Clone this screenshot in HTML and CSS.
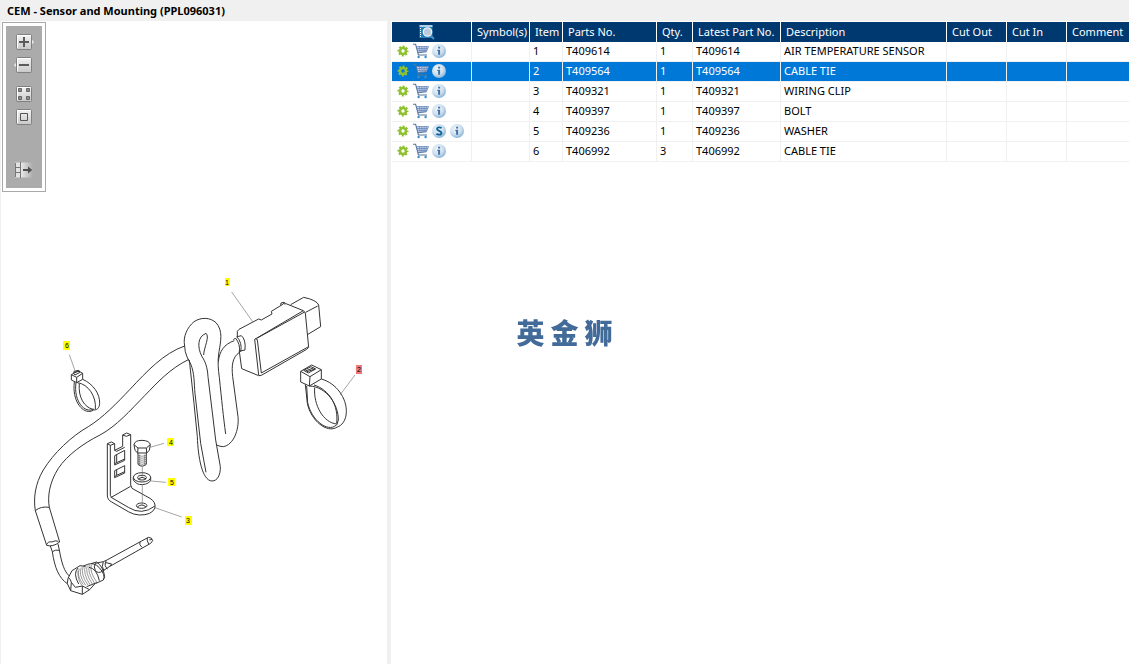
FILE: index.html
```html
<!DOCTYPE html>
<html lang="en">
  <head>
    <meta charset="UTF-8" />
    <meta name="viewport" content="width=device-width, initial-scale=1.0" />
    <title>CEM - Sensor and Mounting (PPL096031)</title>
    <link rel="stylesheet" href="styles.css">
  </head>
  <body>
    <!-- shared icons -->
    <svg class="sprite" aria-hidden="true">
      <defs>
        <linearGradient id="btnFill" x1="0" y1="0" x2="0" y2="1">
          <stop offset="0" stop-color="#f4f4f4" />
          <stop offset="1" stop-color="#c9c9c9" />
        </linearGradient>
        <linearGradient id="fadeFill" x1="0" y1="0" x2="1" y2="0">
          <stop offset="0" stop-color="#e8e8e8" />
          <stop offset="1" stop-color="#ababab" />
        </linearGradient>
        <radialGradient id="discFill" cx="0.4" cy="0.35" r="0.65">
          <stop offset="0" stop-color="#eef5fa" />
          <stop offset="0.6" stop-color="#cfe1ef" />
          <stop offset="1" stop-color="#8fb6d8" />
        </radialGradient>
      </defs>
      <symbol id="gear" viewBox="0 0 16 16">
        <circle cx="8" cy="8" r="3" fill="none" stroke="#8fc131" stroke-width="2.6" />
        <circle cx="8" cy="8" r="4.6" fill="none" stroke="#8fc131" stroke-width="1.8" stroke-dasharray="2 1.61" stroke-dashoffset="1" />
      </symbol>
      <symbol id="cart" viewBox="0 0 16 16">
        <path d="M3.5 3.5h12l-2 5.2-8.5 1z" fill="#c3d2ea" />
        <path d="M0 1.2h2.6L5.4 12h8.6M5 9.7l8.4-1" fill="none" stroke="#55759f" stroke-width="1.1" />
        <path d="M3.4 3.5h12.2l-2.2 5.2M4 5.5h10.8M4.6 7.4h9.4M6.3 3.4l.9 6M8.8 3.4l.3 5.7M11.2 3.4l-.2 5.5M13.5 3.4l-.9 5.4" fill="none" stroke="#6484b8" stroke-width="0.7" />
        <circle cx="5.6" cy="14" r="1.2" fill="#3f8fc5" />
        <circle cx="12.6" cy="14" r="1.2" fill="#3f8fc5" />
      </symbol>
      <symbol id="info" viewBox="0 0 16 16">
        <circle cx="8" cy="8" r="7" fill="url(#discFill)" />
        <path d="M7.1 3.8h2v1.7h-2zM6.3 6.7h2.8v5H7.1V7.9h-.8z" fill="#4670a8" />
      </symbol>
      <symbol id="disc" viewBox="0 0 16 16">
        <circle cx="8" cy="8" r="7" fill="url(#discFill)" />
        <path d="M10.6 5.1C9 3.9 6 4.1 6 6s4.5 1.7 4.5 3.9c0 2.1-3.4 2.2-5.1.9" fill="none" stroke="#12659b" stroke-width="1.9" />
      </symbol>
    </svg>

    <h1 class="title">CEM - Sensor and Mounting (PPL096031)</h1>

    <main class="panes">
      <section class="drawing-pane" aria-label="Drawing">
        <div class="toolbar">
          <div class="toolbar-inner">
            <button class="tool" aria-label="Zoom in">
              <svg viewBox="0 0 20 16"><path d="M17 5.5L19.5 8 17 10.5z" fill="#e4e4e4" stroke="#f4f4f4" /><rect x="2.5" y="0.5" width="15" height="15" rx="1" fill="url(#btnFill)" stroke="#808080" /><path d="M3.5 14V1.5H16.5" fill="none" stroke="#fff" /><path d="M5 8h10M10 3v10" stroke="#5c5c5c" stroke-width="2" /></svg>
            </button>
            <button class="tool" aria-label="Zoom out">
              <svg viewBox="0 0 20 16"><path d="M3 5.5L.5 8 3 10.5z" fill="#e4e4e4" stroke="#f4f4f4" /><rect x="2.5" y="0.5" width="15" height="15" rx="1" fill="url(#btnFill)" stroke="#808080" /><path d="M3.5 14V1.5H16.5" fill="none" stroke="#fff" /><path d="M5 8h10" stroke="#5c5c5c" stroke-width="2" /></svg>
            </button>
            <button class="tool tool-group" aria-label="Fit page">
              <svg viewBox="0 0 20 16"><rect x="2.5" y="0.5" width="15" height="15" rx="1" fill="url(#btnFill)" stroke="#808080" /><path d="M3.5 14V1.5H16.5" fill="none" stroke="#fff" /><path d="M4.5 2.5h3v3h-3zM12.5 2.5h3v3h-3zM4.5 10.5h3v3h-3zM12.5 10.5h3v3h-3z" fill="#8c8c8c" stroke="#666" /></svg>
            </button>
            <button class="tool" aria-label="Actual size">
              <svg viewBox="0 0 20 16"><rect x="2.5" y="0.5" width="15" height="15" rx="1" fill="url(#btnFill)" stroke="#808080" /><path d="M3.5 14V1.5H16.5" fill="none" stroke="#fff" /><path d="M6.5 4.5h7v7h-7z" fill="none" stroke="#555" /></svg>
            </button>
            <button class="tool tool-last" aria-label="Hide list">
              <svg viewBox="0 0 20 16"><path d="M1 0.5h5v15H1z" fill="#e2e2e2" /><path d="M1 5.5h5M1 10.5h5M1.5 1v14M6.5 0v16" fill="none" stroke="#777" /><rect x="7" y="0.5" width="12" height="15" fill="url(#fadeFill)" /><path d="M9 8h6" stroke="#505050" stroke-width="2" /><path d="M14 4.5l4.2 3.5-4.2 3.5z" fill="#505050" /></svg>
            </button>
          </div>
        </div>

        <svg class="drawing" viewBox="1 21 386 643" role="img" aria-label="Sensor and mounting parts">
          <!-- sensor box, cable loops and large cable tie -->
          <g class="line" transform="translate(180 270) scale(0.33333)">
            <path d="M14 228C8 200 22 172 42 155C65 140 92 143 108 158C130 182 122 215 117 245C112 275 115 300 118 322C125 390 130 440 137 492" />
            <path d="M14 228C14 250 24 268 32 282C44 310 42 340 45 370L62 520L78 607" />
            <path d="M28 270L42 400L52 500C54 560 66 632 96 633C112 633 122 615 121 590L107 510L84 320C82 290 76 275 65 258C52 232 52 200 78 190C90 200 72 232 71 255" />
            <path d="M110 525Q120 530 130 530C160 525 178 480 174 440L158 320C154 285 158 262 177 248M115 275C118 245 132 222 163 212" />
            <path d="M160 210L166 204Q182 222 178 247M170 200Q188 218 182 246M172 200L184 197Q198 208 195 240L180 243" />
            <path d="M172 202V184L177 178L236 147L244 150L276 132L274 124L302 107L303 99L312 97L318 101L370 122L376 129L386 232L380 238L244 316L236 317L185 296L178 244M302 107L312 100L316 104M236 315L224 208L370 122M226 206L232 209L244 309L384 231M232 204L374 126" />
            <path d="M332 104L371 82Q410 90 416 105L422 170L382 194M377 127L413 108" />
            <path d="M362 304L395 285L424 299V327L388 348L362 336ZM362 304L390 320L424 299M390 320L388 348M371 301L393 290L407 297L385 309ZM376 303L400 294M381 305L405 297" />
            <path d="M424 327C470 340 500 385 499 425C499 452 484 468 472 471C440 492 392 450 382 400L376 343M380 348L383 398C394 450 442 488 468 466M388 348C440 350 476 405 475 450L470 466M402 345C450 360 476 408 470 460M404 353C400 405 430 458 470 462" />
            <path class="leader" d="M155 66L218 155M525 315L480 375" />
          </g>

          <!-- main cable and small cable tie -->
          <g class="line" transform="translate(20 330) scale(0.33333)">
            <path d="M494 48C430 70 380 125 330 178C290 220 250 262 205 290C155 318 100 370 70 420C45 462 40 505 46 542" />
            <path d="M507 88C450 115 410 160 375 196C330 242 290 288 240 315C190 340 142 375 115 415C88 458 82 500 88 532" />
            <path d="M154 134L175 122L188 130V148L170 158L154 150ZM154 134L170 142L188 130M170 142V158M161 131L162 124L176 121L180 127L165 135ZM163 127L178 124" />
            <path d="M188 148C220 162 240 192 239 220C238 236 230 240 221 240C195 258 155 220 163 156M168 158C160 215 195 252 222 237M172 158C205 162 230 200 226 238M178 161C174 202 193 232 219 238" />
            <path class="leader" d="M148 74L165 122" />
          </g>

          <!-- probe, bracket, bolt and washer -->
          <g class="line" transform="translate(20 420) scale(0.33333)">
            <path d="M46 272Q62 258 88 262M46 272L80 376M88 262L119 366M80 376Q98 382 119 366M80 374Q84 363 96 366Q105 360 115 364" />
            <path d="M91 378L97 395C104 445 118 475 142 491M114 372L118 390C125 430 133 455 148 468M97 395Q106 388 118 391" />
            <path d="M142 491L144 475L156 452L180 437L196 439M142 491L152 512L187 523L209 509L226 490M144 472Q152 476 154 487L166 502L187 498L209 509M154 487L152 512M187 498V523M174 444Q158 460 176 492" />
            <path class="thread" d="M178 446Q168 466 190 494M184 442Q174 464 197 496M190 439Q180 462 204 495M196 437Q188 460 210 494M202 436Q194 458 217 492M208 434Q201 458 224 490M214 434Q208 456 230 486M174 452Q172 478 186 497" />
            <path d="M190 438L203 433M200 500L230 488" />
            <path d="M203 433Q222 426 238 443Q258 466 250 480L228 490M213 431L230 426Q250 440 254 470L250 480M207 442Q230 445 238 482" />
            <path d="M226 430L250 425L259 421L385 352Q397 352 398 362L392 370L268 440L248 453Q235 462 226 452Q220 440 226 430M250 425Q243 440 252 453M259 421Q250 438 263 447M258 428L275 432L268 440M360 366Q356 374 366 382M382 354Q380 362 386 372M388 360L396 358" />
            <path d="M262 71L274 66L284 71V91L308 79V45L320 39L332 44V195L336 205L390 235Q408 246 405 264Q395 286 358 285Q340 284 325 275L275 246Q262 240 262 225ZM262 71L271 76L284 71M271 76V226L275 233L325 262Q365 288 405 258M272 233L332 199M308 45L319 49L332 44M284 91L290 94L314 82" />
            <path d="M284 107L314 91V121L284 135ZM290 104V128L314 117M284 152L314 137V159L284 173ZM290 149V166L314 155M284 131L290 128M284 170L290 166" />
            <ellipse cx="365" cy="257" rx="16" ry="8" />
            <path d="M352 261Q366 249 378 261" />
            <ellipse cx="366" cy="172" rx="26" ry="14" />
            <ellipse cx="366" cy="173" rx="13" ry="7" />
            <path d="M340 172V180Q350 195 367 194Q388 192 392 180V172M355 176Q366 168 378 176" />
            <path d="M342 74Q344 61 366 61Q389 62 391 74L388 91L380 99L353 99L345 91ZM342 74L354 84L379 84L391 74M354 84L353 99M379 84L380 99" />
            <path d="M354 99V133Q366 144 379 133V99" />
            <path class="thread" d="M354 106Q366 112 379 106M354 112Q366 118 379 112M354 118Q366 124 379 118M354 124Q366 130 379 124M354 130Q366 136 379 130M359 104V136M374 104V136" />
            <path class="leader" d="M367 140V170M367 196V254M390 82L432 70M392 183L438 187M405 263L485 291" />
          </g>

          <g class="callout">
            <rect x="225" y="278" width="5" height="8" /><text x="227" y="285">1</text>
            <rect class="picked" x="356" y="365" width="6" height="9" /><text x="359" y="372">2</text>
            <rect x="185" y="516" width="7" height="9" /><text x="188" y="523">3</text>
            <rect x="167" y="438" width="7" height="8" /><text x="171" y="445">4</text>
            <rect x="168" y="478" width="7" height="8" /><text x="172" y="485">5</text>
            <rect x="63" y="341" width="7" height="9" /><text x="67" y="348">6</text>
          </g>
        </svg>
      </section>

      <section class="list-pane" aria-label="Parts list">
        <table class="parts">
          <colgroup>
            <col class="col-icons"><col class="col-symbols"><col class="col-item"><col class="col-part"><col class="col-qty"><col class="col-latest"><col class="col-desc"><col class="col-cut"><col class="col-cut"><col>
          </colgroup>
          <thead>
            <tr>
              <th>
                <button class="search" aria-label="Search list">
                  <svg viewBox="0 0 16 16"><rect x="0.5" y="1" width="13" height="13" fill="#2580b8" /><path d="M0.5 2h13" stroke="#dceaf5" stroke-width="1.5" /><path d="M1.5 4v9.5" stroke="#fff" stroke-dasharray="1 1" /><path d="M11.5 11.5l3.5 3.5" stroke="#4d91c8" stroke-width="2" /><circle cx="8.5" cy="8" r="4.2" fill="#b9cbdc" stroke="#edf4f9" stroke-width="1.3" /></svg>
                </button>
              </th>
              <th>Symbol(s)</th>
              <th>Item</th>
              <th>Parts No.</th>
              <th>Qty.</th>
              <th>Latest Part No.</th>
              <th>Description</th>
              <th>Cut Out</th>
              <th>Cut In</th>
              <th>Comment</th>
            </tr>
          </thead>
          <tbody id="partRows"></tbody>
        </table>
      </section>
    </main>

    <div class="watermark" lang="zh-CN"><span>英</span><span>金</span><span>狮</span></div>

    <script>
      const parts = [
        { item: 1, no: "T409614", qty: 1, desc: "AIR TEMPERATURE SENSOR" },
        { item: 2, no: "T409564", qty: 1, desc: "CABLE TIE", selected: true },
        { item: 3, no: "T409321", qty: 1, desc: "WIRING CLIP" },
        { item: 4, no: "T409397", qty: 1, desc: "BOLT" },
        { item: 5, no: "T409236", qty: 1, desc: "WASHER", supersession: true },
        { item: 6, no: "T406992", qty: 3, desc: "CABLE TIE" },
      ];

      const icon = (id, label) =>
        `<button class="icon" aria-label="${label}"><svg><use href="#${id}" /></svg></button>`;

      const PartRow = (part) => `
        <tr class="${part.selected ? "selected" : ""}">
          <td>
            <div class="icons">
              ${icon("gear", "Options")}${icon("cart", "Add to cart")}${part.supersession ? icon("disc", "Supersession") : ""}${icon("info", "Information")}
            </div>
          </td>
          <td></td>
          <td>${part.item}</td>
          <td>${part.no}</td>
          <td>${part.qty}</td>
          <td>${part.no}</td>
          <td>${part.desc}</td>
          <td></td>
          <td></td>
          <td></td>
        </tr>
      `;

      document.getElementById("partRows").innerHTML = parts.map(PartRow).join("");
    </script>
  </body>
</html>
```
FILE: styles.css
```css
* {
  box-sizing: border-box;
  margin: 0;
  padding: 0;
}

body {
  display: flex;
  flex-direction: column;
  height: 100vh;
  overflow: hidden;
  background: #f0f0f0;
  color: #000;
  font-family: "Noto Sans", "Open Sans", sans-serif;
  font-size: 11px;
}

button {
  display: block;
  border: 0;
  background: none;
  cursor: pointer;
}

button svg {
  display: block;
  width: 100%;
  height: 100%;
}

.sprite {
  position: absolute;
  width: 0;
  height: 0;
}

.title {
  padding: 0 7px;
  font-size: 11px;
  font-weight: 700;
  line-height: 21px;
}

.panes {
  display: flex;
  flex: 1;
  min-height: 0;
}

/* drawing */
.drawing-pane {
  position: relative;
  flex: 0 0 391px;
  border-left: 1px solid #f0f0f0;
  border-right: 4px solid #f0f0f0;
  background: #fff;
}

.drawing {
  display: block;
  width: 100%;
}

.toolbar {
  position: absolute;
  top: 1px;
  left: 1px;
  padding: 3px;
  border: 1px solid #a9a9a9;
  background: #fff;
}

.toolbar-inner {
  display: flex;
  flex-direction: column;
  gap: 7px;
  padding: 8px 8px 10px;
  background: #ababab;
}

.tool {
  width: 20px;
  height: 16px;
}

.tool-group {
  margin-top: 6px;
}

.tool-last {
  margin-top: 30px;
}

.line {
  fill: none;
  stroke: #333;
  stroke-width: 3;
  stroke-linejoin: round;
}

.line .leader {
  stroke: #777;
  stroke-width: 2;
}

.line .thread {
  stroke: #666;
  stroke-width: 2;
}

.callout {
  font-family: "Liberation Sans", Arial, sans-serif;
  font-size: 7px;
  text-anchor: middle;
}

.callout rect {
  fill: #ff0;
}

.callout .picked {
  fill: #f27878;
}

/* parts list */
.list-pane {
  flex: 1;
  min-width: 0;
  padding: 1px 0 0 1px;
  background: #fff;
}

.parts {
  width: 100%;
  table-layout: fixed;
  border-spacing: 0;
}

.parts th,
.parts td {
  height: 20px;
  border-right: 1px solid #f0f0f0;
  line-height: 17px;
  text-align: left;
  vertical-align: top;
  white-space: nowrap;
  overflow: hidden;
}

.parts th {
  padding: 0 0 0 5px;
  border-color: #fff;
  background: #003870;
  color: #fff;
  font-weight: 400;
  line-height: 19px;
}

.parts td {
  padding: 0 0 0 3px;
  border-bottom: 1px solid #f0f0f0;
}

.parts th:last-child,
.parts td:last-child {
  border-right: 0;
}

.parts .selected td {
  background: #0078d7;
  color: #fff;
}

.col-icons { width: 80px; }
.col-symbols { width: 58px; }
.col-item { width: 33px; }
.col-part { width: 94px; }
.col-qty { width: 36px; }
.col-latest { width: 88px; }
.col-desc { width: 166px; }
.col-cut { width: 60px; }

.icons {
  display: flex;
  gap: 2px;
  padding-top: 1px;
}

.icon,
.search {
  width: 16px;
  height: 16px;
}

.search {
  margin: 2px 0 0 22px;
}

.watermark {
  position: fixed;
  inset: 0;
  display: flex;
  gap: 6px;
  align-items: center;
  justify-content: center;
  color: #426b99;
  font-family: "Noto Sans CJK SC", sans-serif;
  font-size: 28px;
  font-weight: 900;
  pointer-events: none;
}
```
